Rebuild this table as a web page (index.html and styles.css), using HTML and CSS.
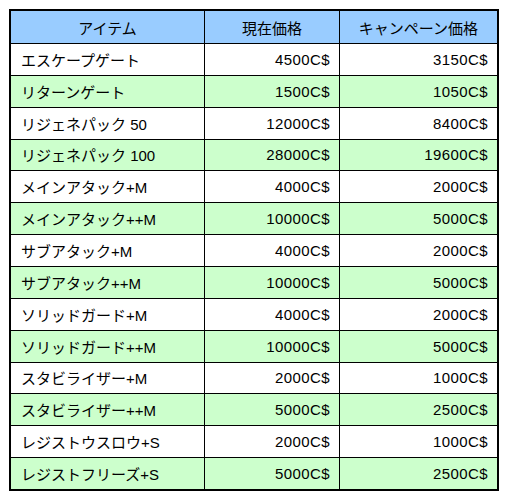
FILE: index.html
```html
<!DOCTYPE html>
<html lang="ja">
<head>
<meta charset="utf-8">
<link rel="stylesheet" href="styles.css">
</head>
<body>
<div class="table">
  <div class="th">アイテム</div><div class="th">現在価格</div><div class="th">キャンペーン価格</div>
  <div class="name">エスケープゲート</div><div class="num">4500C$</div><div class="num">3150C$</div>
  <div class="name g">リターンゲート</div><div class="num g">1500C$</div><div class="num g">1050C$</div>
  <div class="name">リジェネパック 50</div><div class="num">12000C$</div><div class="num">8400C$</div>
  <div class="name g">リジェネパック 100</div><div class="num g">28000C$</div><div class="num g">19600C$</div>
  <div class="name">メインアタック+M</div><div class="num">4000C$</div><div class="num">2000C$</div>
  <div class="name g">メインアタック++M</div><div class="num g">10000C$</div><div class="num g">5000C$</div>
  <div class="name">サブアタック+M</div><div class="num">4000C$</div><div class="num">2000C$</div>
  <div class="name g">サブアタック++M</div><div class="num g">10000C$</div><div class="num g">5000C$</div>
  <div class="name">ソリッドガード+M</div><div class="num">4000C$</div><div class="num">2000C$</div>
  <div class="name g">ソリッドガード++M</div><div class="num g">10000C$</div><div class="num g">5000C$</div>
  <div class="name">スタビライザー+M</div><div class="num">2000C$</div><div class="num">1000C$</div>
  <div class="name g">スタビライザー++M</div><div class="num g">5000C$</div><div class="num g">2500C$</div>
  <div class="name">レジストウスロウ+S</div><div class="num">2000C$</div><div class="num">1000C$</div>
  <div class="name g">レジストフリーズ+S</div><div class="num g">5000C$</div><div class="num g">2500C$</div>
</div>
</body>
</html>
```
FILE: styles.css
```css
html, body {
  margin: 0;
  padding: 0;
  background: #fff;
}
body {
  padding: 9px;
  font-family: "Liberation Sans", "Noto Sans CJK JP", sans-serif;
  font-size: 15px;
  color: #000;
}
.table {
  width: 486px;
  height: 478px;
  border: 2px solid #000;
  background: #000;
  display: grid;
  grid-template-columns: 193px 134px 157px;
  grid-template-rows: 32px repeat(14, 1fr);
  gap: 1px;
}
.table > div {
  background: #fff;
  display: flex;
  align-items: center;
}
.table > .th {
  background: #99ccff;
  justify-content: center;
}
.table > .g {
  background: #ccffcc;
}
.name {
  padding-left: 10px;
}
.num {
  justify-content: flex-end;
  padding-right: 9px;
  letter-spacing: 0.4px;
}
```
